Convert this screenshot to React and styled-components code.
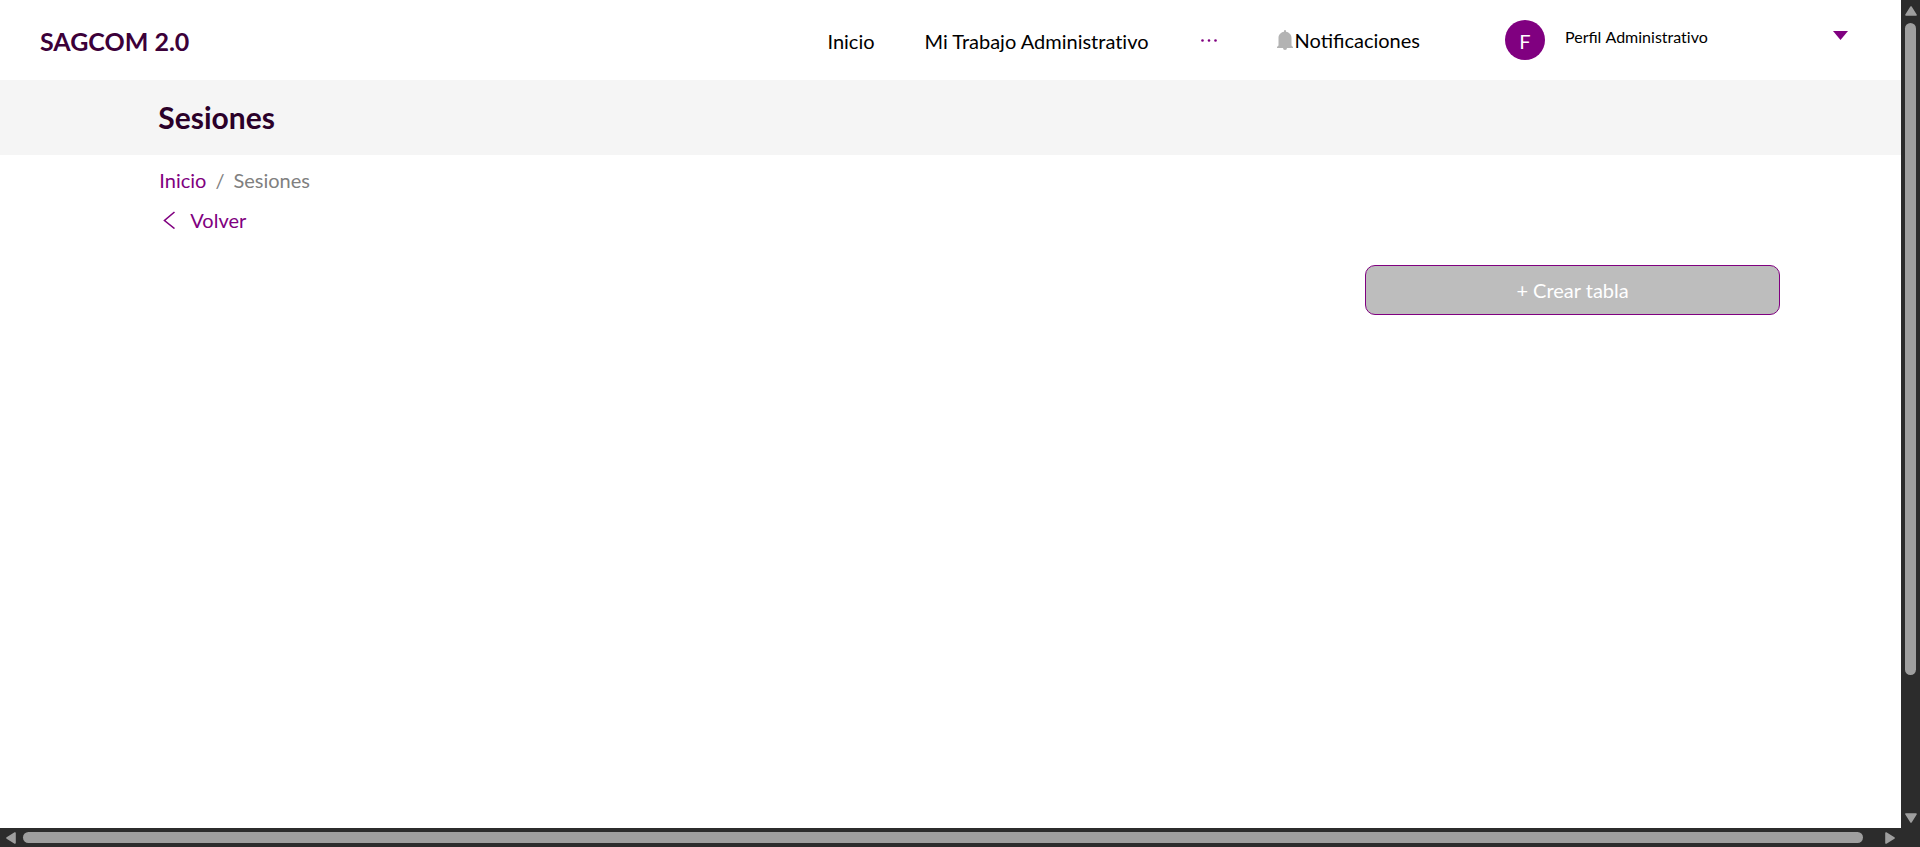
import React from "react";
import styled, { createGlobalStyle } from "styled-components";

const GlobalStyle = createGlobalStyle`
  *, *::before, *::after { box-sizing: border-box; }
  body { margin: 0; background: #fff; font-family: Lato, "Liberation Sans", sans-serif; font-size: 20px; line-height: 24px; color: #000; overflow: hidden; }
  h1, ol { margin: 0; padding: 0; }
  ol { list-style: none; }
  a { text-decoration: none; color: inherit; }
  button { font: inherit; color: inherit; background: none; border: 0; padding: 0; margin: 0; }
`;

const Viewport = styled.div`
  display: grid;
  grid-template-columns: minmax(0, 1fr) 19px;
  grid-template-rows: minmax(0, 1fr) 19px;
  height: 100vh;
  background: #2c2c2c;
`;

const Page = styled.div`
  background: #fff;
  overflow: hidden;
`;

const Header = styled.header`
  display: flex;
  align-items: center;
  height: 80px;
  padding: 0 53px 0 40px;
`;

const Brand = styled.a`
  padding-top: 2px;
  font-size: 25px;
  line-height: 32px;
  font-weight: 700;
  color: #3c0039;
`;

const Nav = styled.nav`
  display: flex;
  align-items: center;
  gap: 50px;
  margin-left: auto;
  padding-top: 2px;
`;

const PlainLetters = styled.span`
  font-variant-ligatures: none;
`;

const MoreButton = styled.button`
  display: flex;
  color: #800080;
  margin-right: 58px;
`;

const Notifications = styled.button`
  display: flex;
  align-items: center;
  gap: 2px;
`;

const Profile = styled.button`
  display: flex;
  align-items: center;
  width: 343px;
  margin-left: 85px;
`;

const Avatar = styled.span`
  display: grid;
  place-items: center;
  width: 40px;
  height: 40px;
  padding-top: 2px;
  border-radius: 50%;
  background: #800080;
  color: #fff;
`;

const ProfileName = styled.span`
  flex: 1;
  margin-left: 20px;
  padding-bottom: 6px;
  text-align: left;
  font-size: 16px;
`;

const Caret = styled.svg`
  margin-bottom: 10px;
`;

const TitleBar = styled.div`
  height: 75px;
  padding: 18px 8.33% 0;
  background: #f5f5f5;
`;

const Title = styled.h1`
  font-size: 30px;
  line-height: 38px;
  color: #2b0029;
`;

const Content = styled.main`
  padding: 13px 121px 0 8.38%;
`;

const Breadcrumb = styled.ol`
  display: flex;
  gap: 9px;
`;

const Crumb = styled.li`
  color: ${(p) => (p.$link ? "#800080" : "#808080")};
`;

const BackLink = styled.a`
  display: inline-flex;
  align-items: center;
  gap: 14px;
  margin-top: 16px;
  padding-left: 4px;
  color: #800080;
`;

const Actions = styled.div`
  display: flex;
  justify-content: flex-end;
  margin-top: 32px;
`;

const CreateButton = styled.button`
  width: 25.6%;
  min-width: 240px;
  height: 50px;
  border: 1px solid #800080;
  border-radius: 10px;
  background: #bdbdbd;
  color: #fff;
`;

const Track = styled.div`
  display: flex;
  flex-direction: ${(p) => (p.$vertical ? "column" : "row")};
  align-items: center;
  gap: 7px;
  padding: ${(p) => (p.$vertical ? "6px 0 5px" : "0 6px")};
`;

const Rail = styled.div`
  display: flex;
  flex: 1;
  flex-direction: ${(p) => (p.$vertical ? "column" : "row")};
`;

const Thumb = styled.div`
  flex: 0 0 ${(p) => p.$size};
  ${(p) => (p.$vertical ? "width" : "height")}: 11px;
  border-radius: 6px;
  background: #9f9f9f;
`;

const ARROWS = {
  up: { w: 12, h: 10, d: "M6 1 11 9H1Z" },
  down: { w: 12, h: 10, d: "M6 9 1 1H11Z" },
  left: { w: 10, h: 12, d: "M1 6 9 1V11Z" },
  right: { w: 10, h: 12, d: "M9 6 1 11V1Z" },
};

function Arrow({ dir }) {
  const { w, h, d } = ARROWS[dir];
  return (
    <svg width={w} height={h} viewBox={`0 0 ${w} ${h}`} fill="#9f9f9f" stroke="#9f9f9f" strokeWidth="1.6" strokeLinejoin="round" aria-hidden="true">
      <path d={d} />
    </svg>
  );
}

function Scrollbar({ vertical, size }) {
  return (
    <Track $vertical={vertical} aria-hidden="true">
      <Arrow dir={vertical ? "up" : "left"} />
      <Rail $vertical={vertical}>
        <Thumb $vertical={vertical} $size={size} />
      </Rail>
      <Arrow dir={vertical ? "down" : "right"} />
    </Track>
  );
}

export default function App() {
  return (
    <>
      <GlobalStyle />
      <Viewport>
        <Page>
          <Header>
            <Brand href="#">SAGCOM 2.0</Brand>
            <Nav>
              <a href="#inicio">Inicio</a>
              <a href="#trabajo"><PlainLetters>Mi Trabajo Administrativo</PlainLetters></a>
              <MoreButton type="button" aria-label="Más opciones">
                <svg width="20" height="20" viewBox="0 0 20 20" fill="currentColor">
                  <circle cx="3.5" cy="9.5" r="1.3" />
                  <circle cx="10" cy="9.5" r="1.3" />
                  <circle cx="16.5" cy="9.5" r="1.3" />
                </svg>
              </MoreButton>
            </Nav>
            <Notifications type="button">
              <svg width="16" height="20" viewBox="0 0 16 20" fill="#b3b3b3" aria-hidden="true">
                <path d="M7 1.800V1a1 1 0 0 1 2 0v.8c3.400.6 5.500 3 5.500 6.200v7.500L16 17v1H10a2 2 0 0 1-4 0H0v-1l1.500-1.500V8c0-3.200 2.100-5.600 5.500-6.200Z" />
              </svg>
              Notificaciones
            </Notifications>
            <Profile type="button">
              <Avatar>F</Avatar>
              <ProfileName>Perfil <PlainLetters>Administrativo</PlainLetters></ProfileName>
              <Caret width="15" height="9" viewBox="0 0 15 9" fill="#800080" aria-hidden="true">
                <path d="M0 0h15L7.500 9Z" />
              </Caret>
            </Profile>
          </Header>
          <TitleBar>
            <Title>Sesiones</Title>
          </TitleBar>
          <Content>
            <nav aria-label="Ruta">
              <Breadcrumb>
                <Crumb $link><a href="#inicio">Inicio</a></Crumb>
                <Crumb aria-hidden="true">/</Crumb>
                <Crumb aria-current="page">Sesiones</Crumb>
              </Breadcrumb>
            </nav>
            <BackLink href="#volver">
              <svg width="13" height="18" viewBox="0 0 13 18" fill="none" stroke="currentColor" strokeWidth="1.600" aria-hidden="true">
                <path d="M11.500 1 1.500 9.500l10 8" />
              </svg>
              Volver
            </BackLink>
            <Actions>
              <CreateButton type="button">+ Crear tabla</CreateButton>
            </Actions>
          </Content>
        </Page>
        <Scrollbar vertical size="83.3%" />
        <Scrollbar size="99.2%" />
      </Viewport>
    </>
  );
}
